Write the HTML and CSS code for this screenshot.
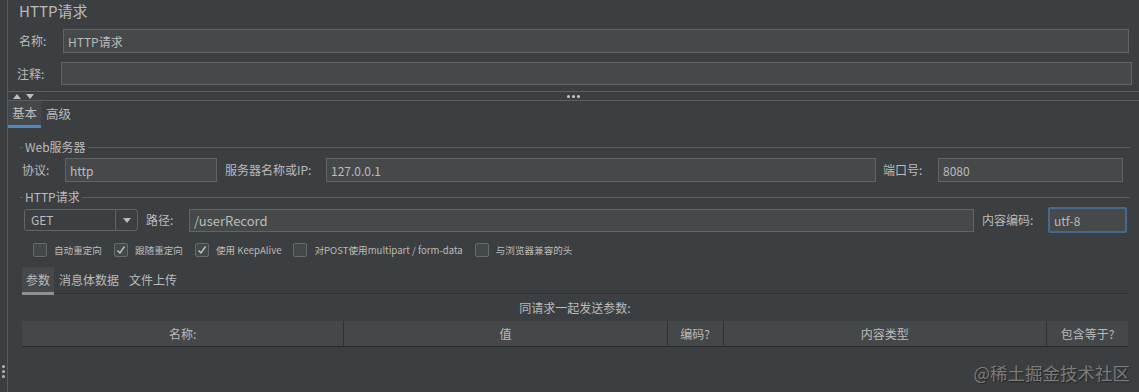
FILE: index.html
```html
<!DOCTYPE html>
<html lang="zh-CN">
<head>
    <meta charset="UTF-8">
    <meta name="viewport" content="width=device-width, initial-scale=1.0">
    <title>HTTP请求</title>
    <link rel="stylesheet" href="styles.css">
</head>
<body>
    <div class="window">
        <div class="gutter">
            <span class="grip"></span>
            <span class="grip"></span>
            <span class="grip"></span>
        </div>

        <div class="main">
            <div class="title">HTTP请求</div>

            <div class="name-row">
                <label for="name">名称:</label>
                <input type="text" id="name" class="field" value="HTTP请求" readonly>
            </div>

            <div class="comment-row">
                <label for="comment">注释:</label>
                <input type="text" id="comment" class="field" value="" readonly>
            </div>

            <div class="splitter">
                <div class="arrows">
                    <svg width="8" height="5" viewBox="0 0 8 5"><polygon points="0,5 4,0 8,5" fill="#bdbdbd"/></svg>
                    <svg width="8" height="5" viewBox="0 0 8 5"><polygon points="0,0 8,0 4,5" fill="#bdbdbd"/></svg>
                </div>
                <div class="dots"><span></span><span></span><span></span></div>
            </div>

            <div class="tabs">
                <span class="tab active">基本</span>
                <span class="tab">高级</span>
            </div>

            <div class="basic">
                <div class="group-title"><span>Web服务器</span></div>
                <div class="server-row">
                    <label class="lbl-protocol">协议:</label>
                    <input type="text" class="field protocol" value="http" readonly>
                    <label class="lbl-host">服务器名称或IP:</label>
                    <input type="text" class="field host" value="127.0.0.1" readonly>
                    <label class="lbl-port">端口号:</label>
                    <input type="text" class="field port" value="8080" readonly>
                </div>

                <div class="group-title"><span>HTTP请求</span></div>
                <div class="request-row">
                    <div class="combo">
                        <span class="combo-value">GET</span>
                        <span class="combo-btn">
                            <svg width="8" height="5" viewBox="0 0 8 5"><polygon points="0,0 8,0 4,5" fill="#bbbbbb"/></svg>
                        </span>
                    </div>
                    <label class="lbl-path">路径:</label>
                    <input type="text" class="field path" value="/userRecord" readonly>
                    <label class="lbl-encoding">内容编码:</label>
                    <input type="text" class="field encoding" value="utf-8" readonly>
                </div>

                <div class="checks">
                    <span class="check"><span class="box"></span>自动重定向</span>
                    <span class="check"><span class="box"><svg width="12" height="12" viewBox="0 0 12 12"><polyline points="2.5,6.5 5,9 9.5,2.5" fill="none" stroke="#c4c4c4" stroke-width="1.4"/></svg></span>跟随重定向</span>
                    <span class="check"><span class="box"><svg width="12" height="12" viewBox="0 0 12 12"><polyline points="2.5,6.5 5,9 9.5,2.5" fill="none" stroke="#c4c4c4" stroke-width="1.4"/></svg></span>使用 KeepAlive</span>
                    <span class="check"><span class="box"></span>对POST使用multipart / form-data</span>
                    <span class="check"><span class="box"></span>与浏览器兼容的头</span>
                </div>

                <div class="params">
                    <div class="subtabs">
                        <span class="subtab active">参数</span>
                        <span class="subtab">消息体数据</span>
                        <span class="subtab">文件上传</span>
                    </div>
                    <div class="params-caption">同请求一起发送参数:</div>
                    <div class="params-head">
                        <span>名称:</span>
                        <span>值</span>
                        <span>编码?</span>
                        <span>内容类型</span>
                        <span>包含等于?</span>
                    </div>
                </div>
            </div>
        </div>

        <div class="watermark">@稀土掘金技术社区</div>
    </div>
</body>
</html>
```

FILE: styles.css
```css
body {
    margin: 0;
    background-color: #3c3f41;
    color: #bbbbbb;
    font-family: "Noto Sans CJK SC", "Noto Sans", sans-serif;
    font-size: 12px;
    overflow: hidden;
}

.window {
    position: relative;
    display: flex;
    height: 100vh;
}

.gutter {
    width: 8px;
    border-right: 1px solid #585a5c;
    display: flex;
    flex-direction: column;
    align-items: center;
    justify-content: flex-end;
    gap: 2px;
    padding-bottom: 14px;
    box-sizing: border-box;
}

.grip {
    width: 3px;
    height: 3px;
    border-radius: 50%;
    background: #b5b5b5;
}

.main {
    flex: 1;
    min-width: 0;
}

.title {
    height: 22px;
    line-height: 22px;
    padding-left: 11px;
    font-size: 15px;
}

label {
    flex: none;
    line-height: 20px;
    white-space: nowrap;
}

.field {
    box-sizing: border-box;
    height: 24px;
    margin: 0;
    padding: 0 4px;
    background: #45494a;
    border: 1px solid #646464;
    color: #bbbbbb;
    font-family: inherit;
    font-size: 12px;
    outline: none;
    min-width: 0;
}

.name-row {
    display: flex;
    align-items: center;
    margin-top: 7px;
    height: 24px;
    padding: 0 10px 0 11px;
}

.name-row label,
.comment-row label {
    width: 44px;
}

.name-row .field {
    flex: 1;
}

.comment-row {
    display: flex;
    align-items: center;
    margin-top: 9px;
    height: 23px;
    padding: 0 7px 0 9px;
}

.comment-row .field {
    flex: 1;
    height: 23px;
}

.splitter {
    box-sizing: border-box;
    margin-top: 6px;
    height: 10px;
    border-top: 1px solid #5c5e60;
    border-bottom: 1px solid #5c5e60;
    display: grid;
    grid-template-columns: 1fr auto 1fr;
    align-items: center;
}

.arrows {
    display: flex;
    gap: 5px;
    padding-left: 5px;
}

.arrows svg {
    display: block;
}

.dots {
    display: flex;
    gap: 2px;
}

.dots span {
    width: 3px;
    height: 3px;
    border-radius: 50%;
    background: #c8c8c8;
}

.tabs {
    display: flex;
    height: 27px;
}

.tab {
    padding: 0 5px;
    line-height: 25px;
    font-size: 12.5px;
}

.tab.active {
    background: #45484a;
    border-bottom: 3px solid #4a88c7;
    line-height: 24px;
    padding: 0 4px;
}

.basic {
    padding: 0 9px 0 12px;
}

.group-title {
    display: flex;
    align-items: center;
    margin-top: 12px;
    height: 14px;
}

.server-row + .group-title {
    margin-top: 8px;
}

.group-title::before {
    content: "";
    width: 3px;
    height: 1px;
    background: #5b5d5f;
}

.group-title::after {
    content: "";
    flex: 1;
    height: 1px;
    background: #5b5d5f;
}

.group-title span {
    padding: 0 2px;
    line-height: 14px;
}

.server-row {
    display: flex;
    align-items: center;
    margin-top: 4px;
    height: 24px;
    padding: 0 7px 0 2px;
}

.lbl-protocol {
    width: 43px;
}

.protocol {
    width: 152px;
}

.lbl-host {
    width: 101px;
    margin-left: 8px;
}

.host {
    flex: 1;
}

.lbl-port {
    width: 55px;
    margin-left: 7px;
}

.port {
    width: 185px;
}

.request-row {
    display: flex;
    align-items: center;
    margin-top: 4px;
    height: 24px;
    padding: 0 3px 0 4px;
}

.combo {
    box-sizing: border-box;
    width: 114px;
    height: 22px;
    display: flex;
    border: 1px solid #646464;
    border-radius: 3px;
    background: #3c3f41;
}

.combo-value {
    flex: 1;
    padding-left: 6px;
    line-height: 20px;
}

.combo-btn {
    width: 21px;
    border-left: 1px solid #646464;
    display: flex;
    align-items: center;
    justify-content: center;
}

.combo-btn svg {
    display: block;
}

.lbl-path {
    width: 43px;
    margin-left: 8px;
}

.path {
    flex: 1;
    height: 23px;
    font-size: 13px;
}

.lbl-encoding {
    width: 66px;
    margin-left: 8px;
}

.encoding {
    width: 79px;
    height: 26px;
    border: 2px solid #46698f;
    border-radius: 2px;
    padding-left: 4px;
}

.checks {
    display: flex;
    align-items: center;
    margin-top: 8px;
    height: 20px;
    padding-left: 13px;
    font-size: 9.6px;
}

.check {
    display: flex;
    align-items: center;
    gap: 7px;
    margin-right: 12px;
    white-space: nowrap;
}

.box {
    box-sizing: border-box;
    width: 14px;
    height: 14px;
    border: 1px solid #6a6a6a;
    border-radius: 2px;
    background: #43494a;
    display: flex;
    align-items: center;
    justify-content: center;
}

.box svg {
    display: block;
}

.params {
    margin: 7px 2px 0;
}

.subtabs {
    display: flex;
    height: 26px;
    border-bottom: 1px solid #2f3133;
}

.subtab {
    height: 26px;
    padding: 0 5px;
    line-height: 26px;
}

.subtab.active {
    height: 25px;
    padding: 0 4px;
    background: #46494b;
    border-bottom: 3px solid #8f9193;
}

.params-caption {
    height: 27px;
    line-height: 27px;
    text-align: center;
}

.params-head {
    display: grid;
    grid-template-columns: 322fr 323fr 56px 323fr 81px;
    height: 25px;
    background: #45484a;
    border-bottom: 1px solid #2b2b2b;
}

.params-head span {
    line-height: 25px;
    text-align: center;
    border-right: 1px solid #2f3133;
}

.params-head span:last-child {
    border-right: none;
}

.watermark {
    position: absolute;
    right: 9px;
    bottom: 9px;
    font-size: 17.5px;
    line-height: 20px;
    color: #7b7b7b;
    text-shadow: 1px 1px 1px rgba(0, 0, 0, 0.45);
}
```
